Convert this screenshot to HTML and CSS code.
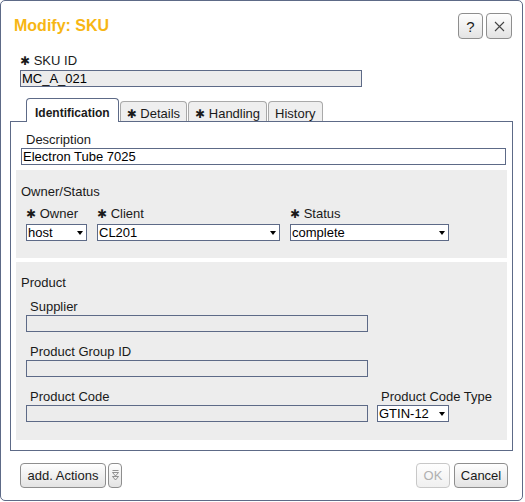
FILE: index.html
```html
<!DOCTYPE html>
<html lang="en">
<head>
<meta charset="utf-8">
<title>Modify: SKU</title>
<link rel="stylesheet" href="styles.css">
</head>
<body>
<div class="dialog">
  <div class="header">
    <h1 class="title">Modify: SKU</h1>
    <div class="hbtns">
      <button class="btn btn-help" type="button">?</button>
      <button class="btn btn-close" type="button" aria-label="Close">
        <svg width="11" height="11" viewBox="0 0 11 11"><path d="M1 1L10 10M10 1L1 10" stroke="#444" stroke-width="1.1" fill="none"/></svg>
      </button>
    </div>
  </div>

  <div class="sku">
    <label class="lbl"><span class="req">✱</span> SKU ID</label>
    <input class="inp inp-gray inp-sku" type="text" value="MC_A_021" readonly>
  </div>

  <div class="tabs">
    <div class="tab tab-active">Identification</div>
    <div class="tab"><span class="req">✱</span> Details</div>
    <div class="tab"><span class="req">✱</span> Handling</div>
    <div class="tab">History</div>
  </div>

  <div class="panel">
    <div class="desc">
      <label class="lbl lbl-indent">Description</label>
      <input class="inp inp-desc" type="text" value="Electron Tube 7025">
    </div>

    <div class="section section-owner">
      <div class="sec-title">Owner/Status</div>
      <div class="row">
        <div class="field">
          <label class="lbl lbl-sel"><span class="req">✱</span> Owner</label>
          <span class="select sel-owner"><select><option>host</option></select></span>
        </div>
        <div class="field">
          <label class="lbl lbl-sel"><span class="req">✱</span> Client</label>
          <span class="select sel-client"><select><option>CL201</option></select></span>
        </div>
        <div class="field">
          <label class="lbl lbl-sel"><span class="req">✱</span> Status</label>
          <span class="select sel-status"><select><option>complete</option></select></span>
        </div>
      </div>
    </div>

    <div class="section section-product">
      <div class="sec-title">Product</div>
      <div class="pfield pfield-first">
        <label class="lbl lbl-p">Supplier</label>
        <input class="inp inp-gray inp-p" type="text" value="">
      </div>
      <div class="pfield">
        <label class="lbl lbl-p">Product Group ID</label>
        <input class="inp inp-gray inp-p" type="text" value="">
      </div>
      <div class="prow">
        <div class="pfield pfield-inline">
          <label class="lbl lbl-p">Product Code</label>
          <input class="inp inp-gray inp-p" type="text" value="">
        </div>
        <div class="pfield pfield-inline pfield-type">
          <label class="lbl lbl-p">Product Code Type</label>
          <span class="select sel-type"><select><option>GTIN-12</option></select></span>
        </div>
      </div>
    </div>
  </div>

  <div class="footer">
    <div class="fgroup">
      <button class="btn btn-actions" type="button">add. Actions</button>
      <button class="btn btn-caret" type="button" aria-label="More">
        <svg width="7" height="11" viewBox="0 0 7 11"><path d="M0.5 0.5H6.5M0.5 2.5H6.5L3.5 6Z M0.5 6.5H6.5L3.5 10Z" stroke="#777" stroke-width="0.8" fill="none"/></svg>
      </button>
    </div>
    <div class="fgroup fgroup-right">
      <button class="btn btn-ok" type="button" disabled>OK</button>
      <button class="btn btn-cancel" type="button">Cancel</button>
    </div>
  </div>
</div>
</body>
</html>
```

FILE: styles.css
```css
* { box-sizing: border-box; }

html, body {
  margin: 0;
  padding: 0;
  background: #fff;
}

body {
  font-family: "Liberation Sans", Arial, sans-serif;
  font-size: 13px;
  color: #1a1a1a;
}

.dialog {
  width: 523px;
  height: 501px;
  border: 1px solid #5d6a87;
  border-radius: 5px;
  background: #fff;
  display: flex;
  flex-direction: column;
}

/* header */
.header {
  display: flex;
  justify-content: space-between;
  align-items: center;
  height: 26px;
  margin-top: 12px;
  padding: 0 10px 0 13px;
}

.title {
  margin: 0;
  font-size: 16px;
  font-weight: bold;
  color: #f7b614;
  line-height: 18px;
}

.hbtns {
  display: flex;
  gap: 3px;
}

.btn {
  font-family: "Liberation Sans", Arial, sans-serif;
  font-size: 13px;
  color: #1a1a1a;
  border: 1px solid #8e8e8e;
  border-radius: 4px;
  background: linear-gradient(#fefefe, #e3e3e3);
  padding: 0;
  height: 25px;
  display: flex;
  align-items: center;
  justify-content: center;
}

.btn-help {
  width: 25px;
  height: 26px;
  font-size: 15px;
}

.btn-close {
  width: 26px;
  height: 26px;
}

/* labels & inputs */
.lbl {
  display: block;
  line-height: 15px;
  margin-bottom: 1px;
}

.req {
  font-family: "DejaVu Sans", sans-serif;
  font-size: 12px;
}

.inp {
  display: block;
  height: 17px;
  border: 1px solid #5d6a87;
  border-radius: 0;
  background: #fff;
  font-family: "Liberation Sans", Arial, sans-serif;
  font-size: 13px;
  color: #000;
  padding: 0 1px;
  margin: 0;
  outline: none;
}

.inp-gray {
  background: #ececec;
}

.sku {
  margin: 14px 0 0 19px;
}

.inp-sku {
  width: 342px;
}

/* tabs */
.tabs {
  display: flex;
  align-items: flex-end;
  gap: 1px;
  height: 23px;
  margin: 11px 0 0 25px;
}

.tab {
  height: 20px;
  padding: 4px 6px 0;
  line-height: 15px;
  border: 1px solid #a9a9a9;
  border-bottom: none;
  border-radius: 4px 4px 0 0;
  background: #efefef;
  white-space: nowrap;
}

.tab-active {
  height: 24px;
  margin-bottom: -1px;
  padding: 7px 8px 0;
  border-color: #5d6a87;
  background: #fff;
  font-size: 12px;
  font-weight: bold;
  position: relative;
  z-index: 1;
}

/* panel */
.panel {
  width: 503px;
  height: 330px;
  margin-left: 9px;
  border: 1px solid #5d6a87;
}

.desc {
  margin: 10px 0 0 10px;
}

.lbl-indent {
  padding-left: 5px;
}

.inp-desc {
  width: 485px;
}

.section {
  width: 491px;
  margin: 5px 0 0 5px;
  background: #ededed;
  padding: 14px 5px 0;
}

.section-owner {
  height: 88px;
}

.section-product {
  height: 178px;
  margin-top: 4px;
  padding-top: 13px;
}

.sec-title {
  line-height: 15px;
}

.row {
  display: flex;
  gap: 10px;
  margin-top: 7px;
  padding-left: 5px;
}

.lbl-sel {
  margin-bottom: 2px;
}

/* selects */
.select {
  display: block;
  position: relative;
  height: 17px;
}

.select select {
  appearance: none;
  -webkit-appearance: none;
  display: block;
  width: 100%;
  height: 17px;
  border: 1px solid #5d6a87;
  border-radius: 0;
  background: #fff;
  font-family: "Liberation Sans", Arial, sans-serif;
  font-size: 13px;
  color: #000;
  padding: 0 16px 0 1px;
  margin: 0;
  line-height: 15px;
}

.select::after {
  content: "";
  position: absolute;
  right: 4px;
  top: 7px;
  border-left: 3.5px solid transparent;
  border-right: 3.5px solid transparent;
  border-top: 4px solid #000;
  pointer-events: none;
}

.sel-owner { width: 61px; }
.sel-client { width: 183px; }
.sel-status { width: 159px; }
.sel-type { width: 72px; }

/* product fields */
.pfield {
  margin: 12px 0 0 5px;
}

.pfield-first {
  margin-top: 9px;
}

.lbl-p {
  padding-left: 4px;
}

.inp-p {
  width: 342px;
}

.prow {
  display: flex;
  gap: 9px;
}

.pfield-inline {
  margin-top: 12px;
}

.pfield-type {
  margin-left: 0;
}

/* footer */
.footer {
  display: flex;
  justify-content: space-between;
  margin-top: 12px;
  padding: 0 14px 0 19px;
}

.fgroup {
  display: flex;
  gap: 2px;
}

.fgroup-right {
  gap: 4px;
}

.btn-actions {
  width: 86px;
}

.btn-caret {
  width: 14px;
}

.btn-ok {
  width: 34px;
  color: #b0b0b0;
  border-color: #c8c8c8;
  background: linear-gradient(#fefefe, #f0f0f0);
}

.btn-cancel {
  width: 54px;
}
```
